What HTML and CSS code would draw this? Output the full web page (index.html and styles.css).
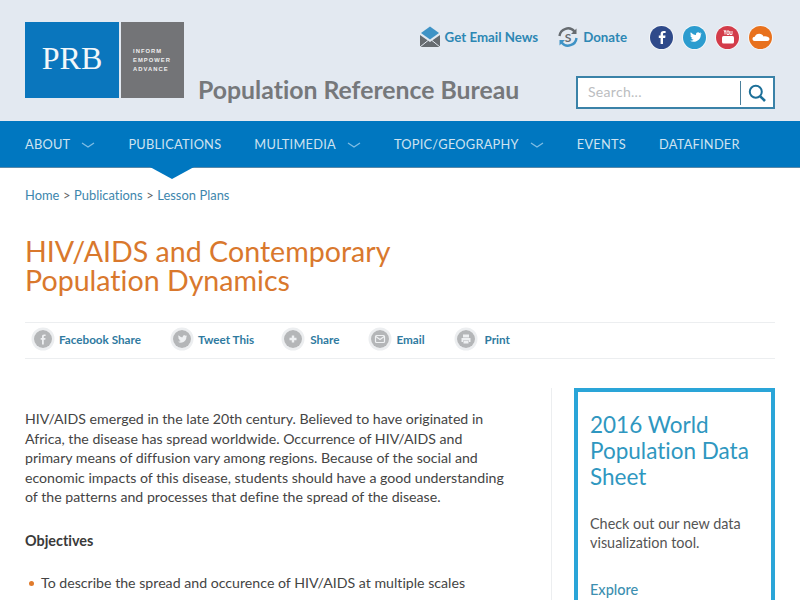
FILE: index.html
```html
<!DOCTYPE html>
<html lang="en">
<head>
<meta charset="utf-8">
<title>HIV/AIDS and Contemporary Population Dynamics</title>
<link rel="stylesheet" href="styles.css">
</head>
<body>
<header class="site-header">
  <div class="logo">
    <div class="logo-blue">PRB</div>
    <div class="logo-grey"><span>INFORM</span><span>EMPOWER</span><span>ADVANCE</span></div>
  </div>
  <div class="header-main">
    <div class="top-links">
      <a class="top-link link-email">
        <svg width="22" height="22" viewBox="0 0 22 22"><path d="M11 0.5 L20 7 L11 13.5 L2 7Z" fill="#3f93c6"/><path d="M1 9 L11 16 L21 9 V21 H1Z" fill="#666b70"/><path d="M1 21 L9 14.5 M21 21 L13 14.5" stroke="#e3e9f1" stroke-width="1"/></svg>
        <span>Get Email News</span>
      </a>
      <a class="top-link link-donate">
        <svg width="22" height="22" viewBox="0 0 22 22"><path d="M2.5 10 A8.5 8.5 0 0 1 17.5 5.5" fill="none" stroke="#666b70" stroke-width="2.4"/><path d="M19.5 2.5 V8 H14Z" fill="#666b70"/><path d="M19.5 12 A8.5 8.5 0 0 1 4.5 16.5" fill="none" stroke="#3f93c6" stroke-width="2.4"/><path d="M2.5 19.5 V14 H8Z" fill="#3f93c6"/><text x="11" y="15.5" text-anchor="middle" class="dollar">S</text></svg>
        <span>Donate</span>
      </a>
      <div class="socials">
        <span class="social fb"><svg width="22" height="22" viewBox="0 0 22 22"><path d="M12 18 V12 H14.2 L14.5 9.6 H12 V8.2 C12 7.4 12.3 7 13.2 7 H14.6 V4.9 H12.7 C10.6 4.9 9.6 6 9.6 7.9 V9.6 H7.8 V12 H9.6 V18Z" fill="#fff"/></svg></span>
        <span class="social tw"><svg width="22" height="22" viewBox="0 0 22 22"><path d="M17.5 7.2 C17 7.5 16.5 7.6 16 7.7 C16.5 7.4 16.9 6.9 17.1 6.3 C16.600 6.600 16 6.800 15.500 6.900 C14.300 5.600 12 6.500 12 8.300 C12 8.500 12 8.700 12.100 8.900 C10 8.800 8.100 7.800 6.800 6.200 C6.100 7.400 6.500 8.900 7.600 9.600 C7.200 9.600 6.800 9.500 6.400 9.300 C6.400 10.600 7.300 11.600 8.500 11.900 C8.100 12 7.700 12 7.300 11.900 C7.700 12.900 8.600 13.600 9.700 13.700 C8.600 14.500 7.300 14.900 5.900 14.700 C10.900 17.700 17 14.200 16.800 8.500 C17.200 8.200 17.500 7.700 17.500 7.200Z" fill="#fff"/></svg></span>
        <span class="social yt"><svg width="22" height="22" viewBox="0 0 22 22"><path d="M7 4 L8 6.500 L9 4 M8 6.500 V8.500 M10 5 H12 V8.500 H10Z M13 5 V8.500 H15 V5" fill="none" stroke="#fff" stroke-width="0.9"/><rect x="5" y="10" width="12" height="7.500" rx="1.500" fill="#fff"/></svg></span>
        <span class="social sc"><svg width="22" height="22" viewBox="0 0 22 22"><path d="M4.500 15 C3 15 2.500 13.700 2.500 12.800 C2.500 11.600 3.500 10.800 4.800 10.800 C5.500 8.900 7 7.700 9.200 7.700 C11.200 7.700 12.800 8.800 13.500 10.400 C15.500 9.800 19.500 10.500 19.500 13 C19.500 14.300 18.500 15 17.300 15Z" fill="#fff"/></svg></span>
      </div>
    </div>
    <div class="header-row">
      <div class="org-name">Population Reference Bureau</div>
      <form class="search">
        <span class="search-placeholder">Search...</span>
        <span class="search-btn"><svg width="20" height="20" viewBox="0 0 20 20"><circle cx="8.800" cy="8.800" r="6" fill="none" stroke="#1c6f98" stroke-width="2"/><path d="M13.300 13.300 L18 18" stroke="#1c6f98" stroke-width="2.600"/></svg></span>
      </form>
    </div>
  </div>
</header>

<nav class="main-nav">
  <a class="nav-item">ABOUT<svg class="chev" width="14" height="6" viewBox="0 0 14 6"><path d="M1 1 L7 5 L13 1" fill="none" stroke="#7fbde4" stroke-width="1.300"/></svg></a>
  <a class="nav-item current">PUBLICATIONS</a>
  <a class="nav-item">MULTIMEDIA<svg class="chev" width="14" height="6" viewBox="0 0 14 6"><path d="M1 1 L7 5 L13 1" fill="none" stroke="#7fbde4" stroke-width="1.300"/></svg></a>
  <a class="nav-item">TOPIC/GEOGRAPHY<svg class="chev" width="14" height="6" viewBox="0 0 14 6"><path d="M1 1 L7 5 L13 1" fill="none" stroke="#7fbde4" stroke-width="1.300"/></svg></a>
  <a class="nav-item">EVENTS</a>
  <a class="nav-item">DATAFINDER</a>
</nav>

<main class="page">
  <div class="crumbs"><a>Home</a> &gt; <a>Publications</a> &gt; <a>Lesson Plans</a></div>
  <h1 class="title">HIV/AIDS and Contemporary<br>Population Dynamics</h1>

  <div class="share-bar">
    <a class="share share-fb"><span class="share-ico"><svg width="18" height="18" viewBox="0 0 18 18"><circle cx="9" cy="9" r="9" fill="#b4b6b8"/><path d="M9.800 14.500 V9.800 H11.300 L11.500 8 H9.800 V7 C9.800 6.400 10 6.100 10.700 6.100 H11.600 V4.500 H10.200 C8.600 4.500 8 5.400 8 6.800 V8 H6.700 V9.800 H8 V14.500Z" fill="#eef0f2"/></svg></span>Facebook Share</a>
    <a class="share share-tw"><span class="share-ico"><svg width="18" height="18" viewBox="0 0 18 18"><circle cx="9" cy="9" r="9" fill="#b4b6b8"/><path d="M14 6 C13.600 6.200 13.200 6.300 12.800 6.400 C13.200 6.100 13.500 5.800 13.700 5.300 C13.300 5.500 12.900 5.700 12.400 5.800 C11.400 4.700 9.700 5.500 9.700 6.900 V7.300 C8 7.200 6.600 6.400 5.600 5.200 C5 6.200 5.300 7.300 6.200 7.900 C5.900 7.900 5.600 7.800 5.300 7.600 C5.300 8.600 6 9.400 6.900 9.600 C6.600 9.700 6.300 9.700 6 9.600 C6.300 10.400 7 10.900 7.800 11 C7 11.600 6 11.900 4.900 11.800 C8.800 14.100 13.500 11.400 13.400 7 C13.700 6.700 13.900 6.400 14 6Z" fill="#eef0f2"/></svg></span>Tweet This</a>
    <a class="share share-plus"><span class="share-ico"><svg width="18" height="18" viewBox="0 0 18 18"><circle cx="9" cy="9" r="9" fill="#b4b6b8"/><path d="M9 5.500 V12.500 M5.500 9 H12.500" stroke="#eef0f2" stroke-width="2.400"/></svg></span>Share</a>
    <a class="share share-mail"><span class="share-ico"><svg width="18" height="18" viewBox="0 0 18 18"><circle cx="9" cy="9" r="9" fill="#b4b6b8"/><rect x="4.500" y="5.500" width="9" height="7" rx="1" fill="none" stroke="#eef0f2" stroke-width="1.200"/><path d="M4.800 6.500 L9 9.500 L13.200 6.500" fill="none" stroke="#eef0f2" stroke-width="1.200"/></svg></span>Email</a>
    <a class="share share-print"><span class="share-ico"><svg width="18" height="18" viewBox="0 0 18 18"><circle cx="9" cy="9" r="9" fill="#b4b6b8"/><rect x="6" y="4.500" width="6" height="3" fill="#eef0f2"/><path d="M4.500 8 H13.500 V12 H12 V10.500 H6 V12 H4.500Z" fill="#eef0f2"/><rect x="6.500" y="11" width="5" height="2.500" fill="#eef0f2"/></svg></span>Print</a>
  </div>

  <div class="content">
    <article class="article">
      <p class="intro">HIV/AIDS emerged in the late 20th century. Believed to have originated in<br>Africa, the disease has spread worldwide. Occurrence of HIV/AIDS and<br>primary means of diffusion vary among regions. Because of the social and<br>economic impacts of this disease, students should have a good understanding<br>of the patterns and processes that define the spread of the disease.</p>
      <h2 class="objectives">Objectives</h2>
      <ul class="obj-list">
        <li>To describe the spread and occurence of HIV/AIDS at multiple scales</li>
      </ul>
    </article>
    <aside class="sidebar">
      <div class="card">
        <h3 class="card-title">2016 World Population Data Sheet</h3>
        <p class="card-text">Check out our new data visualization tool.</p>
        <a class="card-link">Explore</a>
      </div>
    </aside>
  </div>
</main>
</body>
</html>
```
FILE: styles.css
```css
* { box-sizing: border-box; }
html, body { margin: 0; height: 600px; overflow: hidden; }
body {
  background: #fff;
  font-family: "Lato", "Liberation Sans", sans-serif;
  font-variant-ligatures: none;
  color: #444;
}
a { color: inherit; text-decoration: none; }

.site-header {
  height: 121px;
  background: #e3e9f1;
  padding: 22px 25px 0;
  display: flex;
  align-items: flex-start;
}
.logo { display: flex; gap: 2px; width: 159px; height: 76px; flex: none; }
.logo-blue {
  width: 94px;
  background: #0a76bd;
  color: #f2f7fa;
  font-family: "Liberation Serif", serif;
  font-size: 32px;
  display: flex;
  align-items: center;
  justify-content: center;
  padding-bottom: 3px;
}
.logo-grey {
  width: 63px;
  background: #737477;
  color: #eeeeee;
  font-family: "Liberation Sans", sans-serif;
  font-size: 5.800px;
  font-weight: 700;
  letter-spacing: 1.050px;
  line-height: 9.200px;
  display: flex;
  flex-direction: column;
  padding: 25px 0 0 12px;
}
.header-main { flex: 1; min-width: 0; margin-left: 14px; display: flex; flex-direction: column; }
.top-links { display: flex; align-items: center; justify-content: flex-end; height: 30px; margin: 0 3px 1px 0; }
.header-row { display: flex; justify-content: space-between; align-items: flex-start; }
.org-name {
  margin-top: 23px;
  font-size: 24.800px;
  font-weight: 700;
  color: #76787b;
  line-height: 28px;
  white-space: nowrap;
}
.top-link {
  display: flex;
  align-items: center;
  gap: 4px;
  font-size: 13.300px;
  font-weight: 700;
  color: #2d87b4;
  white-space: nowrap;
}
.top-link svg { flex: none; }
.link-email { margin-right: 19px; }
.link-donate { margin-right: 23px; }
.dollar { font-family: "Lato", sans-serif; font-size: 12px; font-weight: 700; fill: #666b70; }
.socials { display: flex; gap: 10px; }
.social {
  width: 23px;
  height: 23px;
  border-radius: 50%;
  display: block;
  box-shadow: 0 0 0 1px #f4f6f8;
}
.social svg { display: block; margin: 0.5px; }
.fb { background: #2f4a8a; }
.tw { background: #2c9ccf; }
.yt { background: #d33c4a; }
.sc { background: #e8711d; }
.search {
  margin-top: 23px;
  width: 199px;
  height: 33px;
  background: #fff;
  border: 2px solid #3a82a8;
  display: flex;
  align-items: center;
  justify-content: space-between;
  padding-left: 10px;
}
.search-placeholder { font-size: 14px; color: #bbbdc0; letter-spacing: 0.3px; padding-bottom: 2px; }
.search-btn {
  width: 33px;
  height: 24px;
  border-left: 1px solid #4a7f9b;
  display: flex;
  align-items: center;
  justify-content: center;
}

.main-nav {
  height: 47px;
  background: #0077c0;
  border-bottom: 1px solid #5b89a8;
  display: flex;
  align-items: center;
  padding-left: 25px;
}
.nav-item {
  display: flex;
  align-items: center;
  font-size: 12.800px;
  letter-spacing: 0.25px;
  color: #cfe3f0;
  margin-right: 33px;
  position: relative;
}
.chev { margin-left: 11px; margin-top: 2px; }
.nav-item.current::after {
  content: "";
  position: absolute;
  left: 22px;
  top: calc(100% + 15px);
  border-left: 22px solid transparent;
  border-right: 22px solid transparent;
  border-top: 12px solid #0077c0;
}

.page { padding: 0 25px; }
.crumbs { margin-top: 18px; font-size: 12.900px; line-height: 18px; color: #666; word-spacing: 0.3px; }
.crumbs a { color: #3d86ad; }
.title {
  margin: 33px 0 0;
  font-size: 28.600px;
  font-weight: 400;
  line-height: 29px;
  color: #d9782d;
}
.share-bar {
  margin-top: 27px;
  height: 37px;
  border-top: 1px solid #eceef0;
  border-bottom: 1px solid #eceef0;
  display: flex;
  align-items: center;
  padding: 0 0 4px 9px;
  font-size: 11.700px;
  font-weight: 700;
  color: #2f7a9f;
}
.share { display: flex; align-items: center; gap: 7px; }
.share-ico {
  width: 18px;
  height: 18px;
  border-radius: 50%;
  box-shadow: 0 0 0 2.500px #eceef0;
  display: block;
}
.share-ico svg { display: block; }
.share-fb { margin-right: 32px; }
.share-tw { margin-right: 30px; }
.share-plus { margin-right: 32px; gap: 8px; }
.share-mail { margin-right: 32px; }
.share-print { gap: 10px; }

.content { display: flex; margin-top: 29px; }
.article { width: 526px; flex: none; padding-top: 21px; }
.intro { margin: 0; font-size: 14.150px; line-height: 19.500px; color: #444; white-space: nowrap; }
.objectives { margin: 24.500px 0 0; font-size: 14.400px; font-weight: 700; line-height: 20px; color: #3a3a3a; }
.obj-list { margin: 22px 0 0; padding: 0 0 0 16px; font-size: 14.170px; line-height: 20px; list-style: none; }
.obj-list li { position: relative; white-space: nowrap; }
.obj-list li::before {
  content: "";
  position: absolute;
  left: -12px;
  top: 8px;
  width: 5px;
  height: 5px;
  border-radius: 50%;
  background: #e07b2c;
}
.sidebar {
  border-left: 1px solid #eceef0;
  padding-left: 22px;
  flex: 1;
  min-height: 240px;
}
.card {
  border: 4px solid #2aa5d8;
  border-bottom: 0;
  padding: 20px 12px 0;
  height: 240px;
}
.card-title { margin: 0; font-size: 22.500px; font-weight: 400; line-height: 26px; color: #2f97c0; }
.card-text { margin: 24px 0 0; font-size: 14.400px; line-height: 19px; color: #555; }
.card-link { display: block; margin-top: 29px; font-size: 14.500px; font-weight: 500; color: #3d8fb0; }
```
